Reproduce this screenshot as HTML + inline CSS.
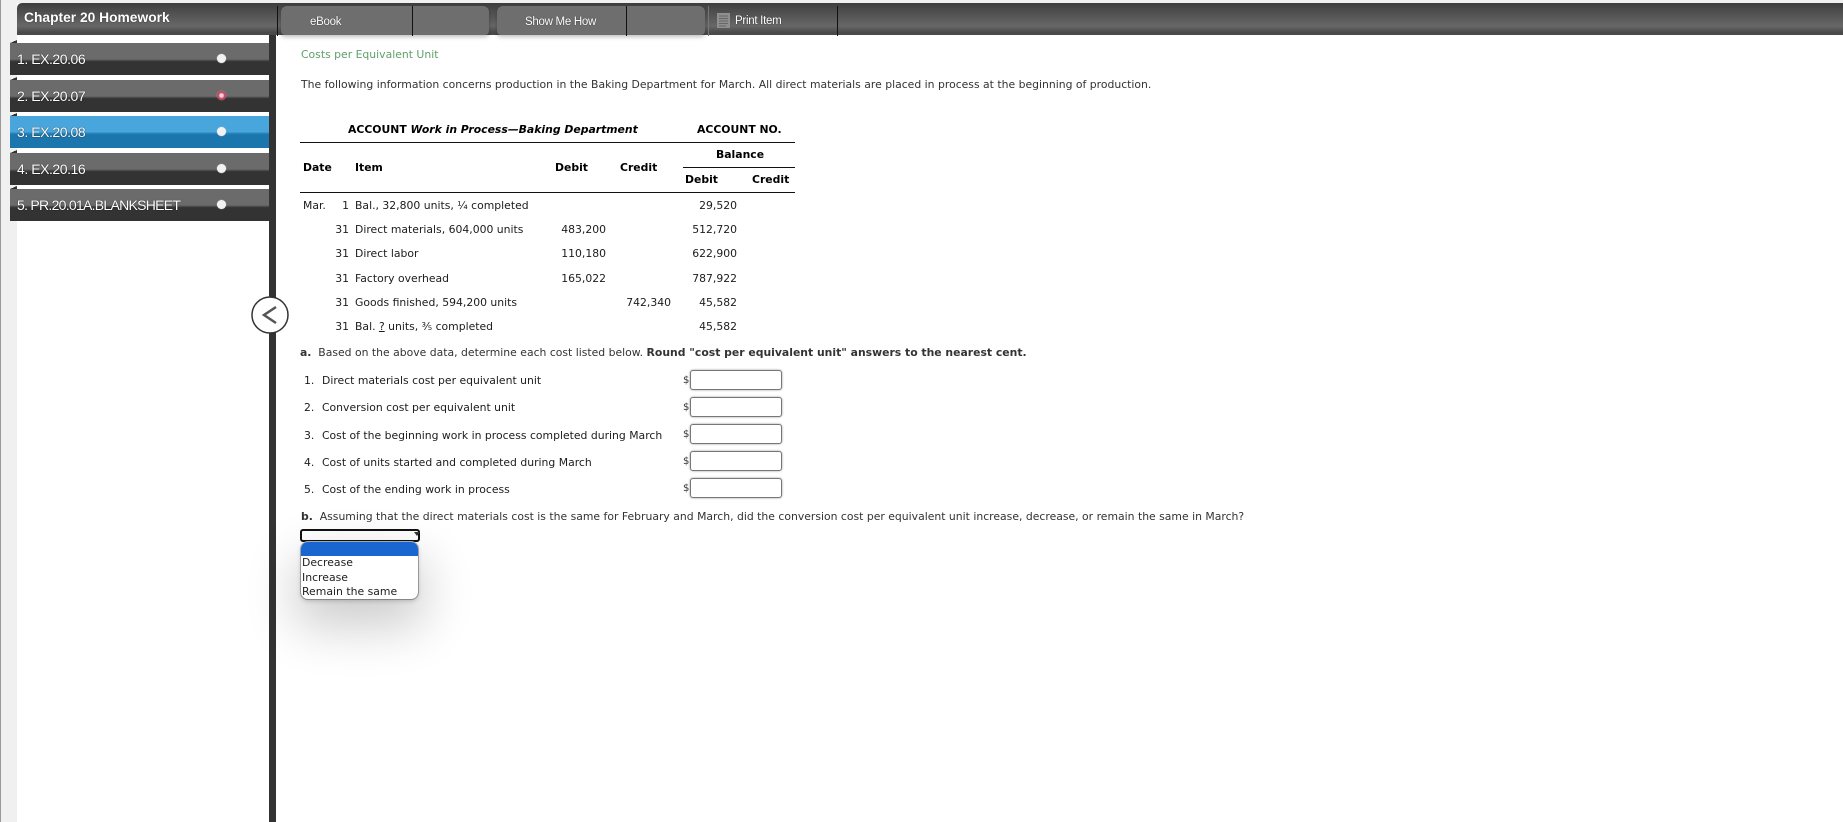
<!DOCTYPE html>
<html><head><meta charset="utf-8"><style>
html,body{margin:0;padding:0;width:1843px;height:822px;overflow:hidden;background:#fff}
body{position:relative;font-family:"DejaVu Sans","Liberation Sans",sans-serif;font-size:10.83px;color:#1c1c1c}
.a{position:absolute}
.t{position:absolute;white-space:nowrap;line-height:14px;height:14px}
.r{text-align:right}
.b{font-weight:bold;color:#000}
.nav{position:absolute;left:10px;width:259px;height:32px;background:linear-gradient(#6b6b6b 0,#6b6b6b 16px,#5a5a5a 17px,#3a3a3a 18px,#333 19px,#333 100%)}
.nav span{position:absolute;left:7px;top:7px;font:14px/18px "Liberation Sans",sans-serif;color:#fff;letter-spacing:-.45px;white-space:nowrap;text-shadow:0 0 1px #000}
.nav i{position:absolute;left:207px;top:11px;width:9px;height:9px;border-radius:50%;background:#f2f2f2;box-shadow:0 0 1px #ddd}
.tri{position:absolute;left:10px;width:7px;height:3px;background:linear-gradient(to bottom right,#f0f0f0 50%,#333 50%)}
.l{position:absolute;background:#111;height:1px}
.v{position:absolute;width:1px;background:#111;top:6px;height:30px}
.in{position:absolute;left:690px;width:90px;height:18px;border:1px solid #777;border-radius:3px;background:#fff;box-shadow:0 0 2px #999}
.d{position:absolute;font-size:10px;color:#333;line-height:14px}
.tb{position:absolute;white-space:nowrap;line-height:14px;font:11.5px/14px 'Liberation Sans',sans-serif;color:#fff;letter-spacing:-.28px;text-shadow:0 0 1px #222}
</style></head><body>
<div class="a" style="left:0;top:0;width:1843px;height:3px;background:#f0f0f0"></div>
<div class="a" style="left:0;top:0;width:17px;height:822px;background:#f0f0f0"></div>
<div class="a" style="left:0;top:0;width:1px;height:822px;background:#999"></div>
<div class="a" style="left:17px;top:3px;width:1826px;height:32px;border-top-left-radius:5px;background:linear-gradient(#3d3d3d 0,#4d4d4d 25%,#676767 72%,#4a4a4a 92%,#4a4a4a 100%)"></div>
<div class="t" style="left:24px;top:11px;font:bold 13.8px/14px 'Liberation Sans',sans-serif;color:#fff;text-shadow:0 0 1px #222">Chapter 20 Homework</div>
<div class="a" style="left:281px;top:6px;width:208px;height:29px;background:#6e6e6e;border-radius:6px 6px 4px 4px;box-shadow:0 2px 4px rgba(0,0,0,.25)"></div>
<div class="a" style="left:497px;top:6px;width:208px;height:29px;background:#6e6e6e;border-radius:6px 6px 4px 4px;box-shadow:0 2px 4px rgba(0,0,0,.25)"></div>
<div class="v" style="left:277px"></div><div class="v" style="left:412px"></div><div class="v" style="left:626px"></div>
<div class="v" style="left:708px;background:#777"></div><div class="v" style="left:837px"></div>
<div class="tb" style="left:310px;top:15px">eBook</div>
<div class="tb" style="left:525px;top:15px">Show Me How</div>
<div class="tb" style="left:735px;top:14px">Print Item</div>
<svg class="a" style="left:717px;top:13px" width="13" height="15"><rect width="13" height="15" fill="#8f8f8f"/><path d="M2 3h9M2 5.5h9M2 8h9M2 10.5h9M2 13h7" stroke="#666" stroke-width="1"/></svg>

<div class="a" style="left:269px;top:35px;width:7px;height:787px;background:#333"></div>
<div class="tri" style="top:40px"></div><div class="nav" style="top:43px"><span>1. EX.20.06</span><i></i></div>
<div class="tri" style="top:77px"></div><div class="nav" style="top:80px"><span>2. EX.20.07</span><i style="background:radial-gradient(#f4d0d8 0,#f4d0d8 25%,#c9415f 50%,#c9415f 100%)"></i></div>
<div class="tri" style="top:113px"></div><div class="nav" style="top:116px;background:linear-gradient(#48a6dd 0,#48a6dd 16px,#2a88c0 17px,#1b76ae 19px,#1b76ae 100%)"><span>3. EX.20.08</span><i></i></div>
<div class="tri" style="top:150px"></div><div class="nav" style="top:153px"><span>4. EX.20.16</span><i></i></div>
<div class="tri" style="top:186px"></div><div class="nav" style="top:189px"><span style="letter-spacing:-.72px">5. PR.20.01A.BLANKSHEET</span><i></i></div>

<svg class="a" style="left:251px;top:296px" width="38" height="38"><circle cx="19" cy="19" r="18" fill="#fff" stroke="#333" stroke-width="1.5"/><path d="M25 11L13 19L25 27" fill="none" stroke="#555" stroke-width="2.5"/></svg>

<div class="t" style="left:301px;top:48px;color:#5f9f6a">Costs per Equivalent Unit</div>
<div class="t" style="left:301px;top:78px;color:#333">The following information concerns production in the Baking Department for March. All direct materials are placed in process at the beginning of production.</div>

<div class="t b" style="left:348px;top:123px">ACCOUNT <i>Work in Process—Baking Department</i></div>
<div class="t b" style="left:697px;top:123px">ACCOUNT NO.</div>
<div class="l" style="left:300px;top:142px;width:495px"></div>
<div class="t b" style="left:716px;top:148px">Balance</div>
<div class="l" style="left:683px;top:167px;width:112px"></div>
<div class="t b" style="left:303px;top:161px">Date</div>
<div class="t b" style="left:355px;top:161px">Item</div>
<div class="t b" style="left:555px;top:161px">Debit</div>
<div class="t b" style="left:620px;top:161px">Credit</div>
<div class="t b" style="left:685px;top:173px">Debit</div>
<div class="t b" style="left:752px;top:173px">Credit</div>
<div class="l" style="left:300px;top:192px;width:495px"></div>

<div class="t" style="left:303px;top:199px">Mar.</div>
<div class="t r" style="left:325px;top:199px;width:24px">1</div><div class="t" style="left:355px;top:199px">Bal., 32,800 units, ¼ completed</div><div class="t r" style="left:660px;top:199px;width:77px">29,520</div>
<div class="t r" style="left:325px;top:223px;width:24px">31</div><div class="t" style="left:355px;top:223px">Direct materials, 604,000 units</div><div class="t r" style="left:530px;top:223px;width:76px">483,200</div><div class="t r" style="left:660px;top:223px;width:77px">512,720</div>
<div class="t r" style="left:325px;top:247px;width:24px">31</div><div class="t" style="left:355px;top:247px">Direct labor</div><div class="t r" style="left:530px;top:247px;width:76px">110,180</div><div class="t r" style="left:660px;top:247px;width:77px">622,900</div>
<div class="t r" style="left:325px;top:272px;width:24px">31</div><div class="t" style="left:355px;top:272px">Factory overhead</div><div class="t r" style="left:530px;top:272px;width:76px">165,022</div><div class="t r" style="left:660px;top:272px;width:77px">787,922</div>
<div class="t r" style="left:325px;top:296px;width:24px">31</div><div class="t" style="left:355px;top:296px">Goods finished, 594,200 units</div><div class="t r" style="left:600px;top:296px;width:71px">742,340</div><div class="t r" style="left:660px;top:296px;width:77px">45,582</div>
<div class="t r" style="left:325px;top:320px;width:24px">31</div><div class="t" style="left:355px;top:320px">Bal. <u>?</u> units, ⅗ completed</div><div class="t r" style="left:660px;top:320px;width:77px">45,582</div>

<div class="t" style="left:300px;top:346px;color:#333"><b>a.</b>&nbsp; Based on the above data, determine each cost listed below. <b>Round "cost per equivalent unit" answers to the nearest cent.</b></div>

<div class="t" style="left:304px;top:374px">1.</div><div class="t" style="left:322px;top:374px">Direct materials cost per equivalent unit</div>
<div class="t" style="left:304px;top:401px">2.</div><div class="t" style="left:322px;top:401px">Conversion cost per equivalent unit</div>
<div class="t" style="left:304px;top:429px">3.</div><div class="t" style="left:322px;top:429px">Cost of the beginning work in process completed during March</div>
<div class="t" style="left:304px;top:456px">4.</div><div class="t" style="left:322px;top:456px">Cost of units started and completed during March</div>
<div class="t" style="left:304px;top:483px">5.</div><div class="t" style="left:322px;top:483px">Cost of the ending work in process</div>
<div class="d" style="top:374px;left:683px">$</div><div class="in" style="top:370px"></div>
<div class="d" style="top:401px;left:683px">$</div><div class="in" style="top:397px"></div>
<div class="d" style="top:428px;left:683px">$</div><div class="in" style="top:424px"></div>
<div class="d" style="top:455px;left:683px">$</div><div class="in" style="top:451px"></div>
<div class="d" style="top:482px;left:683px">$</div><div class="in" style="top:478px"></div>

<div class="t" style="left:301px;top:510px;color:#333"><b>b.</b>&nbsp; Assuming that the direct materials cost is the same for February and March, did the conversion cost per equivalent unit increase, decrease, or remain the same in March?</div>

<div class="a" style="left:300px;top:529px;width:116px;height:9px;border:2px solid #111;border-radius:3px;background:#fff"></div>
<div class="a" style="left:414px;top:532px;width:0;height:0;border:3px solid transparent;border-top:4px solid #333"></div>
<div class="a" style="left:301px;top:542px;width:117px;height:57px;background:#fff;border-radius:7px;box-shadow:0 22px 50px 6px rgba(0,0,0,.2),0 2px 5px rgba(0,0,0,.2),0 0 0 1px #b5b5b5;overflow:hidden">
<div style="height:14px;background:#1a66d0"></div>
<div style="position:absolute;left:1px;top:14px;line-height:14.5px;font-size:10.87px;color:#222;white-space:nowrap">Decrease<br>Increase<br>Remain the same</div>
</div>
</body></html>
